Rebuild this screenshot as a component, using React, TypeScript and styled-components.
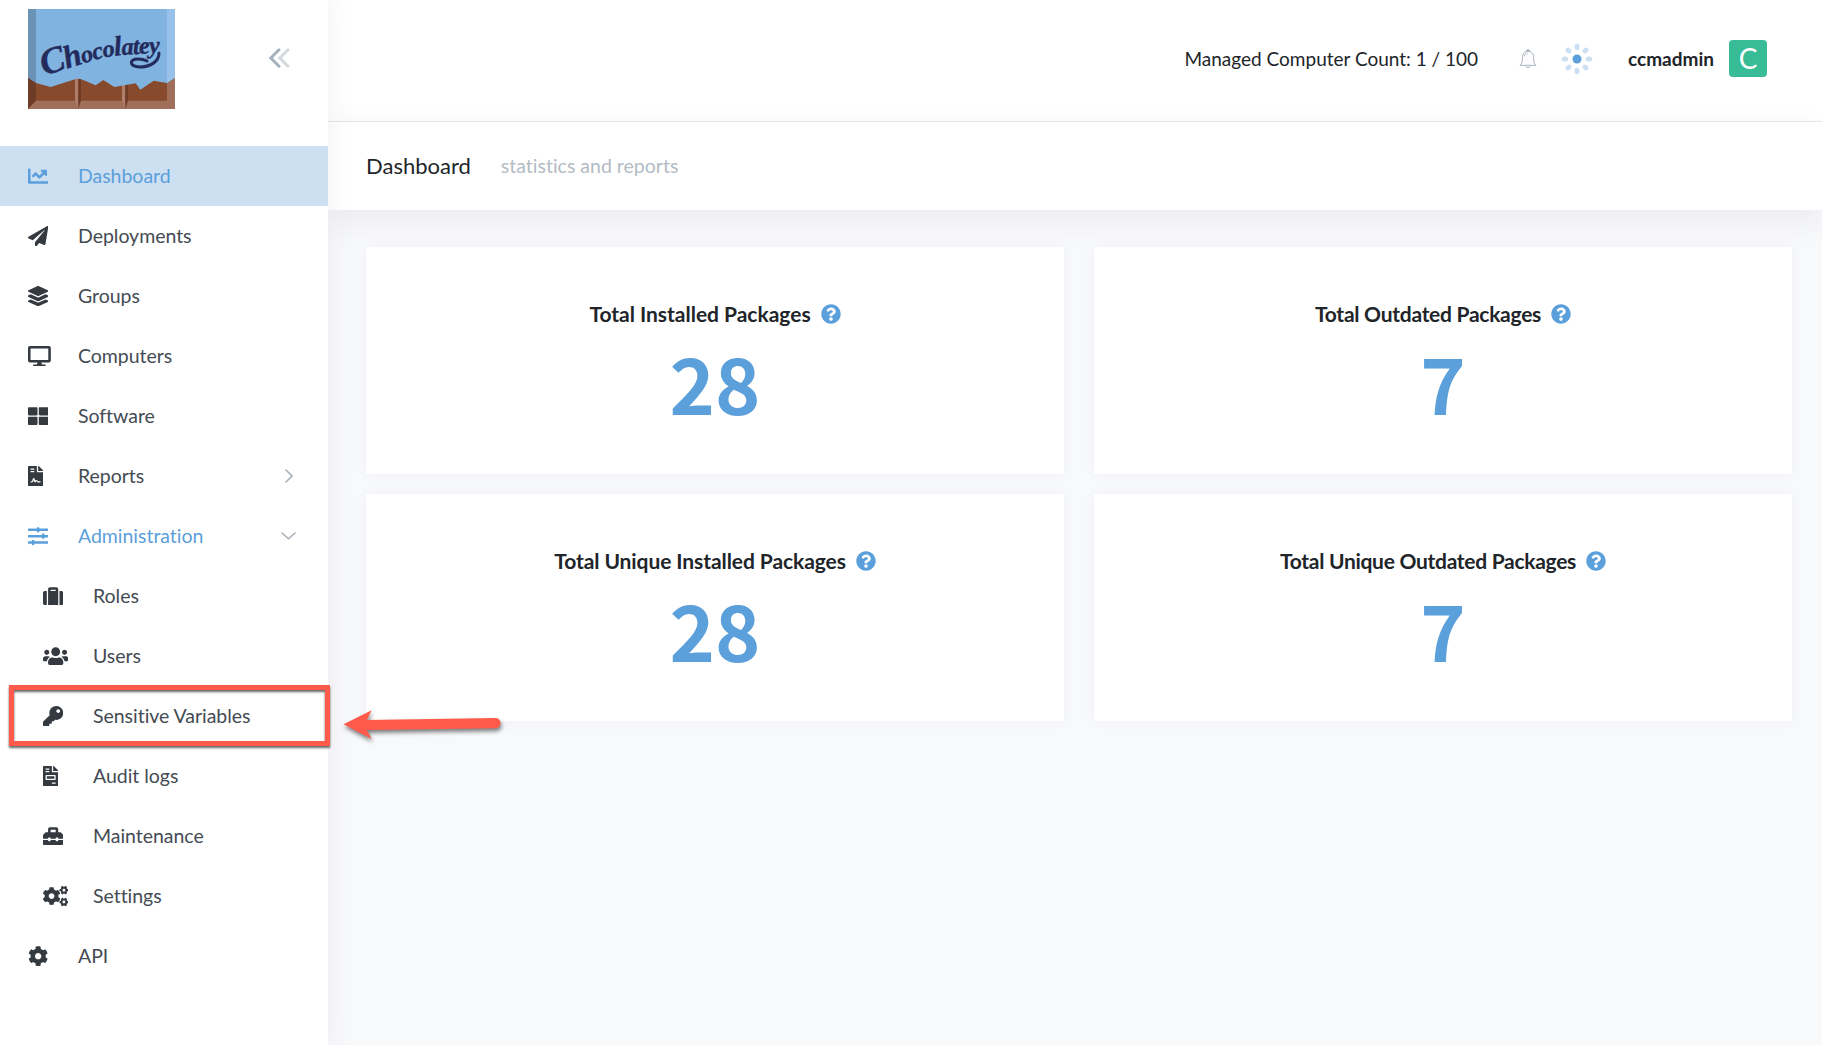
import React from "react";
import styled, { createGlobalStyle, css } from "styled-components";
import type { IconType } from "react-icons";
import {
  FaChartLine,
  FaPaperPlane,
  FaLayerGroup,
  FaDesktop,
  FaThLarge,
  FaFileContract,
  FaSlidersH,
  FaSuitcase,
  FaUsers,
  FaKey,
  FaFileInvoice,
  FaToolbox,
  FaCogs,
  FaCog,
  FaQuestionCircle,
} from "react-icons/fa";

const blue = "#5b9fdb";
const ink = "#212529";

const GlobalStyle = createGlobalStyle`
  *, *::before, *::after { box-sizing: border-box; }
  body {
    margin: 0;
    background: #f8f9fb;
    color: ${ink};
    font-family: Lato, "Noto Sans", sans-serif;
    font-variant-ligatures: none;
    overflow: hidden;
  }
`;

const Shell = styled.div`
  position: relative;
  display: flex;
  width: 100%;
  height: 100vh;
`;

const Sidebar = styled.aside`
  position: relative;
  z-index: 1;
  flex: 0 0 328px;
  background: #fff;
  box-shadow: 0 0 28px rgba(82, 63, 105, 0.08);
`;

const Brand = styled.div`
  display: flex;
  align-items: flex-start;
  justify-content: space-between;
  height: 146px;
  padding: 9px 38px 0 28px;
`;

const CollapseButton = styled.button`
  margin: 39px 0 0;
  padding: 0;
  border: 0;
  background: none;
  line-height: 0;
`;

const NavRow = styled.a<{ $active?: boolean; $open?: boolean; $sub?: boolean }>`
  display: flex;
  align-items: center;
  height: 60px;
  padding: 0 31px 0 ${(p) => (p.$sub ? 43 : 28)}px;
  color: ${(p) => (p.$active || p.$open ? blue : "#444b53")};
  ${(p) =>
    p.$active &&
    css`
      background: #cde0f2;
    `}
`;

const NavIcon = styled.span<{ $tinted?: boolean; $ratio: number }>`
  flex: 0 0 50px;
  color: ${(p) => (p.$tinted ? blue : "#343a40")};
  line-height: 0;

  svg {
    width: ${(p) => p.$ratio * 20.3}px;
    height: 20.3px;
  }
`;

const NavLabel = styled.span`
  flex: 1;
  font-size: 19.5px;
  letter-spacing: -0.03px;
  line-height: 24px;
  white-space: nowrap;
`;

const Arrow = styled.span`
  display: grid;
  place-items: center;
  width: 17px;
  line-height: 0;
`;

const Main = styled.main`
  display: flex;
  flex: 1;
  flex-direction: column;
  min-width: 0;
`;

const TopBar = styled.header`
  display: flex;
  align-items: center;
  justify-content: flex-end;
  height: 122px;
  padding: 0 55px 4px 0;
  border-bottom: 1px solid #e8e9eb;
  background: #fff;
`;

const Count = styled.span`
  margin-right: 41px;
  font-size: 19px;
  line-height: 24px;
  white-space: nowrap;
`;

const Bell = styled.span`
  margin-right: 24px;
  line-height: 0;
`;

const Spinner = styled.span`
  margin-right: 35px;
  line-height: 0;
`;

const UserName = styled.strong`
  margin-right: 15px;
  font-size: 19px;
  line-height: 24px;
`;

const Avatar = styled.span`
  display: flex;
  align-items: center;
  justify-content: center;
  width: 38px;
  height: 37px;
  border-radius: 4px;
  background: #38bc98;
  color: #fff;
  font-size: 28px;
  line-height: 37px;
`;

const SubHeader = styled.div`
  display: flex;
  align-items: center;
  height: 88px;
  padding: 0 38px;
  background: #fff;
  box-shadow: 0 10px 30px rgba(82, 63, 105, 0.08);
`;

const PageTitle = styled.h1`
  margin: 0 30px 0 0;
  font-size: 22px;
  font-weight: 400;
  line-height: 28px;
`;

const PageHint = styled.span`
  color: #b3bbc4;
  font-size: 19.5px;
  line-height: 28px;
`;

const CardGrid = styled.section`
  position: relative;
  display: grid;
  grid-template-columns: 1fr 1fr;
  gap: 20px 30px;
  padding: 37px 30px 0 38px;
`;

const Card = styled.article`
  display: flex;
  flex-direction: column;
  align-items: center;
  height: 227px;
  padding-top: 52px;
  background: #fff;
  box-shadow: 0 0 13px rgba(82, 63, 105, 0.04);
`;

const CardTitle = styled.h2<{ $tracking: number }>`
  display: flex;
  align-items: center;
  gap: 10px;
  margin: 0;
  font-size: 21px;
  font-weight: 700;
  letter-spacing: ${(p) => p.$tracking}px;
  line-height: 30px;
  white-space: nowrap;

  svg {
    width: 20px;
    height: 20px;
    color: ${blue};
  }
`;

const CardValue = styled.div`
  margin-top: 5px;
  color: ${blue};
  font-family: "Noto Sans CJK SC", "Noto Sans", sans-serif;
  font-size: 77px;
  font-weight: 700;
  line-height: 96px;
`;

const Highlight = styled.div`
  position: absolute;
  z-index: 2;
  top: 685px;
  left: 9px;
  width: 321px;
  height: 61px;
  border: 5px solid #ff5a4a;
  filter: drop-shadow(0 2px 1px rgba(0, 0, 0, 0.6));
`;

const Pointer = styled.svg`
  position: absolute;
  z-index: 2;
  top: 700px;
  left: 335px;
  filter: drop-shadow(1px 3px 2px rgba(0, 0, 0, 0.5));
`;

function Logo() {
  return (
    <svg width="147" height="100" viewBox="0 0 147 100" aria-label="Chocolatey">
      <rect width="147" height="100" fill="#884a2c" />
      <path d="M0 60H8V92L0 100Z" fill="#6e3b26" />
      <path d="M139 60H147V100H0L8 91.7H139Z" fill="#a06f5a" />
      <path d="M47 65H50.3V100L47 91.7Z" fill="#ae7e6a" />
      <path d="M50.3 65H53V91.7L50.3 100Z" fill="#6e3b26" />
      <path d="M94 65H97.3V100L94 91.7Z" fill="#ae7e6a" />
      <path d="M97.3 65H100V91.7L97.3 100Z" fill="#6e3b26" />
      <path
        d="M8 0H139V74L125.7 71.7L112.3 80.7L107.7 74.3L86.3 78L75.3 71L67.7 76.3L52.7 70L48.7 69.7L22.7 78L8 74Z"
        fill="#80b3e0"
      />
      <path d="M0 0H8V74L0 68.7Z" fill="#6a93b6" />
      <path d="M139 0H147V68.7L139 74Z" fill="#98c2e9" />
      <path id="brand-curve" d="M16 67C31 62 45 58 60 53S85 46.5 100 45.5S125 44 150 44" fill="none" />
      <text
        fill="#232a5c"
        stroke="#232a5c"
        strokeWidth="0.4"
        fontFamily='"Liberation Serif", serif'
        fontStyle="italic"
        fontWeight="700"
        fontSize="24"
      >
        <textPath href="#brand-curve" textLength="119" lengthAdjust="spacing">
          <tspan fontSize="37">C</tspan>
          <tspan fontSize="32">h</tspan>oco<tspan fontSize="28">l</tspan>atey
        </textPath>
      </text>
      <path
        d="M131 44C131 53 122 58 111 58C101 57 101 50 110 50C114 50 117 51 119 52"
        fill="none"
        stroke="#232a5c"
        strokeWidth="3"
        strokeLinecap="round"
      />
    </svg>
  );
}

function CollapseIcon() {
  return (
    <svg width="21" height="20" viewBox="0 0 21 20" fill="none" strokeWidth="3" strokeLinecap="round">
      <path d="M19 1.8L10.8 10L19 18.2" stroke="#d5d9df" />
      <path d="M10 1.8L1.8 10L10 18.2" stroke="#a6b1bb" />
    </svg>
  );
}

function ChevronRight() {
  return (
    <svg width="8" height="14" viewBox="0 0 8 14" fill="none" stroke="#a6b1bb" strokeWidth="1.6" strokeLinecap="round">
      <path d="M1 1L7 7L1 13" />
    </svg>
  );
}

function ChevronDown() {
  return (
    <svg width="15" height="8" viewBox="0 0 15 8" fill="none" stroke="#a6b1bb" strokeWidth="1.6" strokeLinecap="round">
      <path d="M1 1L7.5 6.8L14 1" />
    </svg>
  );
}

function BellIcon() {
  return (
    <svg width="18" height="20" viewBox="0 0 18 20" fill="none" stroke="#a9b3bd" strokeWidth="1">
      <path d="M1 16.3C3.2 14.5 3.4 12.8 3.4 8.5C3.4 4.6 5.6 2.4 9 2.4S14.6 4.6 14.6 8.5C14.6 12.8 14.8 14.5 17 16.3Z" />
      <path d="M5.2 7.4C5.5 5.4 6.7 4.4 8.6 4.2" />
      <path d="M6.8 17Q9 20.4 11.2 17M7.3 2.4Q7.3.7 9 .7T10.7 2.4" />
      <path d="M8 1.4H10" strokeWidth="1.4" />
    </svg>
  );
}

function SpinnerIcon() {
  return (
    <svg width="32" height="32" viewBox="-16 -16 32 32">
      {[0, 45, 90, 135, 180, 225, 270, 315].map((angle) => (
        <ellipse key={angle} cx="0" cy="-12" rx="2.5" ry="3.3" fill="#cce0f3" transform={`rotate(${angle})`} />
      ))}
      <circle r="4.5" fill={blue} />
    </svg>
  );
}

interface NavItem {
  label: string;
  icon: IconType;
  ratio?: number;
  active?: boolean;
  open?: boolean;
  sub?: boolean;
  arrow?: "right" | "down";
}

const navItems: NavItem[] = [
  { label: "Dashboard", icon: FaChartLine, active: true },
  { label: "Deployments", icon: FaPaperPlane },
  { label: "Groups", icon: FaLayerGroup },
  { label: "Computers", icon: FaDesktop, ratio: 1.125 },
  { label: "Software", icon: FaThLarge },
  { label: "Reports", icon: FaFileContract, ratio: 0.75, arrow: "right" },
  { label: "Administration", icon: FaSlidersH, open: true, arrow: "down" },
  { label: "Roles", icon: FaSuitcase, sub: true },
  { label: "Users", icon: FaUsers, ratio: 1.25, sub: true },
  { label: "Sensitive Variables", icon: FaKey, sub: true },
  { label: "Audit logs", icon: FaFileInvoice, ratio: 0.75, sub: true },
  { label: "Maintenance", icon: FaToolbox, sub: true },
  { label: "Settings", icon: FaCogs, ratio: 1.25, sub: true },
  { label: "API", icon: FaCog },
];

const stats = [
  { title: "Total Installed Packages", value: 28, tracking: -0.02 },
  { title: "Total Outdated Packages", value: 7, tracking: -0.27 },
  { title: "Total Unique Installed Packages", value: 28, tracking: -0.08 },
  { title: "Total Unique Outdated Packages", value: 7, tracking: -0.29 },
];

export default function App() {
  return (
    <>
      <GlobalStyle />
      <Shell>
        <Sidebar>
          <Brand>
            <Logo />
            <CollapseButton aria-label="Collapse menu">
              <CollapseIcon />
            </CollapseButton>
          </Brand>
          <nav>
            {navItems.map(({ label, icon: Icon, ratio = 1, active, open, sub, arrow }) => (
              <NavRow key={label} $active={active} $open={open} $sub={sub}>
                <NavIcon $tinted={active || open} $ratio={ratio}>
                  <Icon />
                </NavIcon>
                <NavLabel>{label}</NavLabel>
                {arrow && <Arrow>{arrow === "right" ? <ChevronRight /> : <ChevronDown />}</Arrow>}
              </NavRow>
            ))}
          </nav>
        </Sidebar>
        <Main>
          <TopBar>
            <Count>Managed Computer Count: 1 / 100</Count>
            <Bell>
              <BellIcon />
            </Bell>
            <Spinner>
              <SpinnerIcon />
            </Spinner>
            <UserName>ccmadmin</UserName>
            <Avatar>C</Avatar>
          </TopBar>
          <SubHeader>
            <PageTitle>Dashboard</PageTitle>
            <PageHint>statistics and reports</PageHint>
          </SubHeader>
          <CardGrid>
            {stats.map(({ title, value, tracking }) => (
              <Card key={title}>
                <CardTitle $tracking={tracking}>
                  {title}
                  <FaQuestionCircle />
                </CardTitle>
                <CardValue>{value}</CardValue>
              </Card>
            ))}
          </CardGrid>
        </Main>
        <Highlight />
        <Pointer width="175" height="50" viewBox="335 700 175 50">
          <path
            d="M343.5 724.3L371.7 710.3L366.7 720L495.5 718A5 5 0 0 1 495.5 728.2L366.7 730L371.7 739Z"
            fill="#ff5a4a"
          />
        </Pointer>
      </Shell>
    </>
  );
}
